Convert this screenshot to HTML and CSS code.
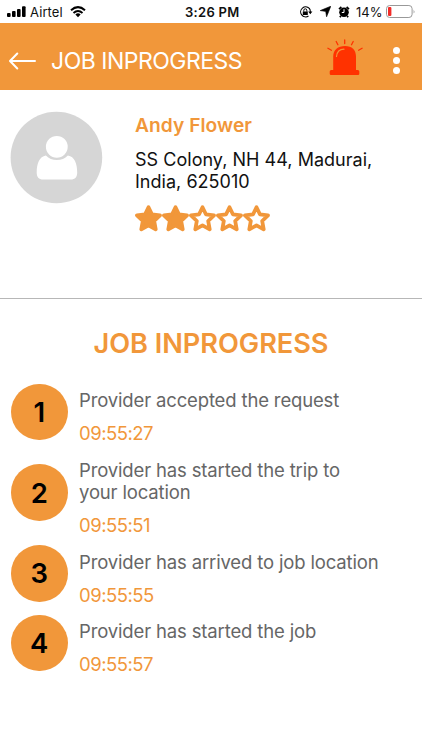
FILE: index.html
```html
<!DOCTYPE html>
<html lang="en">
<head>
<meta charset="utf-8">
<title>Job Inprogress</title>
<link rel="stylesheet" href="styles.css">
</head>
<body>
<div class="status">
  <svg class="signal" width="19" height="12" viewBox="0 0 19 12"><rect x="0" y="7" width="3.6" height="4" rx="1"/><rect x="5" y="5" width="3.6" height="6" rx="1"/><rect x="10" y="3" width="3.6" height="8" rx="1"/><rect x="15" y="0.3" width="3.6" height="10.7" rx="1"/></svg>
  <span class="carrier">Airtel</span>
  <svg class="wifi" width="16" height="12" viewBox="0 0 16 12"><path d="M1 4.3Q8-2 15 4.3M3.5 6.9Q8 3 12.5 6.9" fill="none" stroke="#000" stroke-width="2"/><path d="M5.4 8.4Q8 6.3 10.6 8.4L8 11.2Z"/></svg>
  <span class="clock">3:26 PM</span>
  <svg class="lock" width="14" height="12" viewBox="0 0 14 12"><path d="M10.3 2.4A5 5 0 1 0 9.5 10M10.3 2.4Q11.5 4 11.3 6" fill="none" stroke="#000" stroke-width="1.1"/><path d="M9.2 5.5h4.2l-2.1 2.7zM3.8 5.4h5v3.6h-5z"/><path d="M4.8 5.6V4.3a1.5 1.5 0 0 1 3 0v1.3" fill="none" stroke="#000"/></svg>
  <svg class="nav" width="11" height="11" viewBox="0 0 11 11"><path d="M10.8.2L6.6 10.8 5.7 5.4.2 4.6Z" stroke="#000" stroke-width=".6"/></svg>
  <svg class="alarm" width="12" height="12" viewBox="0 0 12 12"><circle cx="6" cy="6.3" r="4.8"/><path d="M1 3.1L3.4 1M11 3.1L8.6 1M2.8 10l-.9 1.3M9.2 10l.9 1.3" stroke="#000" stroke-width="1.7"/><path d="M6 3.2v3.3H3.8" fill="none" stroke="#fff" stroke-width="1"/></svg>
  <span class="percent">14%</span>
  <svg class="battery" width="30" height="13" viewBox="0 0 30 13"><rect x=".5" y=".5" width="25.6" height="12" rx="3.2" fill="#fff" stroke="#999"/><rect x="2" y="2" width="3.4" height="9" rx="1" fill="#f22c28"/><path d="M27.6 4.5q1.7 2 0 4z" fill="#999"/></svg>
</div>
<header class="bar">
  <svg class="back" width="28" height="20" viewBox="0 0 28 20"><path d="M27 10H2.5M9.3 2.5L2 10l7.3 7.5" fill="none" stroke="#fff" stroke-width="2" stroke-linecap="round" stroke-linejoin="round"/></svg>
  <h1 class="title">JOB INPROGRESS</h1>
  <svg class="siren" width="38" height="38" viewBox="0 0 38 38"><path d="M4 36q-1.3 0-1.3-1.3v-2.2q0-1.5 1.5-1.5h2V17.5C6.2 11 11 7 18 7s11 4 11 10.500V31h1.800q1.500 0 1.500 1.500v2.200q0 1.300-1.300 1.300z" fill="#ff3200"/><path d="M9.500 17.500Q10.200 10.500 17 10.200" fill="none" stroke="#f1973a" stroke-width="1.200" stroke-linecap="round"/><path d="M17.700 1v3.500M9.200 2.500l1.700 3.200M26.200 2.500l-1.700 3.200M.9 9.200l3.500 2M35.100 9.200l-3.500 2" stroke="#ff3200" stroke-width="1.300" stroke-linecap="round"/></svg>
  <svg class="more" width="8" height="28" viewBox="0 0 8 28"><g fill="#fff"><circle cx="4.5" cy="3.5" r="3.5"/><circle cx="4.5" cy="13.5" r="3.5"/><circle cx="4.5" cy="23.5" r="3.5"/></g></svg>
</header>
<section class="profile">
  <svg class="avatar" width="93" height="93" viewBox="0 0 93 93"><g transform="translate(.4 .5)"><circle cx="46" cy="46" r="45.8" fill="#d6d6d6"/><circle cx="46.4" cy="35.3" r="10.9" fill="#fff"/><path d="M35.5 44C29 45 26.3 52 26.3 61c0 4.5 2 7 6.5 7h27.5c4.5 0 6.5-2.5 6.5-7 0-9-2.7-16-9.3-17C54.5 47.3 51 48.6 46.5 48.6S38.500 47.3 35.5 44z" fill="#fff"/></g></svg>
  <div class="details">
    <h2 class="name">Andy Flower</h2>
    <p class="address">SS Colony, NH 44, Madurai,<br>India, 625010</p>
    <svg class="stars" width="136" height="28" viewBox="0 0 136 28">
      <defs><path id="star" d="M13.5 2.200L16.900 9.300 25 10.400 19.200 16 20.700 24.300 13.500 20.400 6.300 24.300 7.800 16 2 10.400 10.100 9.300Z" stroke-width="3.8" stroke-linejoin="round"/></defs>
      <g stroke="#f1973a"><g fill="#f1973a"><use href="#star"/><use href="#star" x="27"/></g><g fill="#fff"><use href="#star" x="54"/><use href="#star" x="81"/><use href="#star" x="108"/></g></g>
    </svg>
  </div>
</section>
<main>
  <h2 class="heading">JOB INPROGRESS</h2>
  <ol class="steps">
    <li><span class="num">1</span><div class="info"><p class="event">Provider accepted the request</p><time>09:55:27</time></div></li>
    <li><span class="num">2</span><div class="info"><p class="event">Provider has started the trip to<br>your location</p><time>09:55:51</time></div></li>
    <li><span class="num">3</span><div class="info"><p class="event">Provider has arrived to job location</p><time>09:55:55</time></div></li>
    <li><span class="num">4</span><div class="info"><p class="event">Provider has started the job</p><time>09:55:57</time></div></li>
  </ol>
</main>
</body>
</html>
```
FILE: styles.css
```css
* { box-sizing: border-box; margin: 0; padding: 0; }
body { width: 422px; height: 750px; background: #fff; color: #111; font-family: Inter, "Liberation Sans", sans-serif; overflow: hidden; }
svg { display: block; flex: none; }
.status { display: flex; align-items: center; height: 23px; padding-left: 7px; font-size: 13px; white-space: nowrap; }
.carrier { width: 33px; margin-left: 4px; letter-spacing: 0.1px; }
.wifi { margin-left: 7px; }
.clock { width: 56px; margin-left: 99px; font-weight: 600; letter-spacing: 0.3px; }
.lock { margin-left: 58px; }
.nav { margin-left: 7px; }
.alarm { margin-left: 7px; }
.percent { width: 27px; margin-left: 6px; }
.battery { margin-left: 3px; }
.bar { display: flex; align-items: center; height: 67px; padding-left: 8px; background: #f1973a; color: #fff; }
.title { width: 200px; margin: 9px 0 0 15px; font-size: 23px; line-height: 28px; font-weight: 400; letter-spacing: -0.5px; white-space: nowrap; }
.back { margin-top: 9px; }
.siren { margin: 2px 0 0 76px; }
.more { margin: 9px 0 0 27px; }
.profile { display: flex; height: 209px; padding: 21px 0 0 10px; border-bottom: 1px solid #b7b7b7; }
.details { margin-left: 32px; }
.name { margin-top: 2px; color: #f1973a; font-size: 19.2px; line-height: 25px; font-weight: 600; letter-spacing: 0.05px; }
.address { margin-top: 10.5px; font-size: 18px; line-height: 22.5px; letter-spacing: 0.03px; white-space: nowrap; }
.stars { margin-top: 11px; }
.heading { margin-top: 28px; color: #f1973a; font-size: 27.2px; line-height: 34px; font-weight: 600; letter-spacing: -0.05px; text-align: center; }
.steps { display: flex; flex-direction: column; gap: 4px; margin-top: 18px; padding-left: 11px; list-style: none; }
.steps li { display: flex; align-items: center; }
.num { display: flex; align-items: center; justify-content: center; width: 56.5px; height: 56.5px; border-radius: 50%; background: #f1973a; color: #000; font-size: 27.5px; font-weight: 600; }
.info { margin-left: 11.5px; padding-top: 10px; font-size: 18.5px; line-height: 22.5px; white-space: nowrap; }
.event { color: #666; letter-spacing: -0.15px; }
time { display: block; margin-top: 10.5px; color: #f1973a; letter-spacing: -0.5px; }
```
